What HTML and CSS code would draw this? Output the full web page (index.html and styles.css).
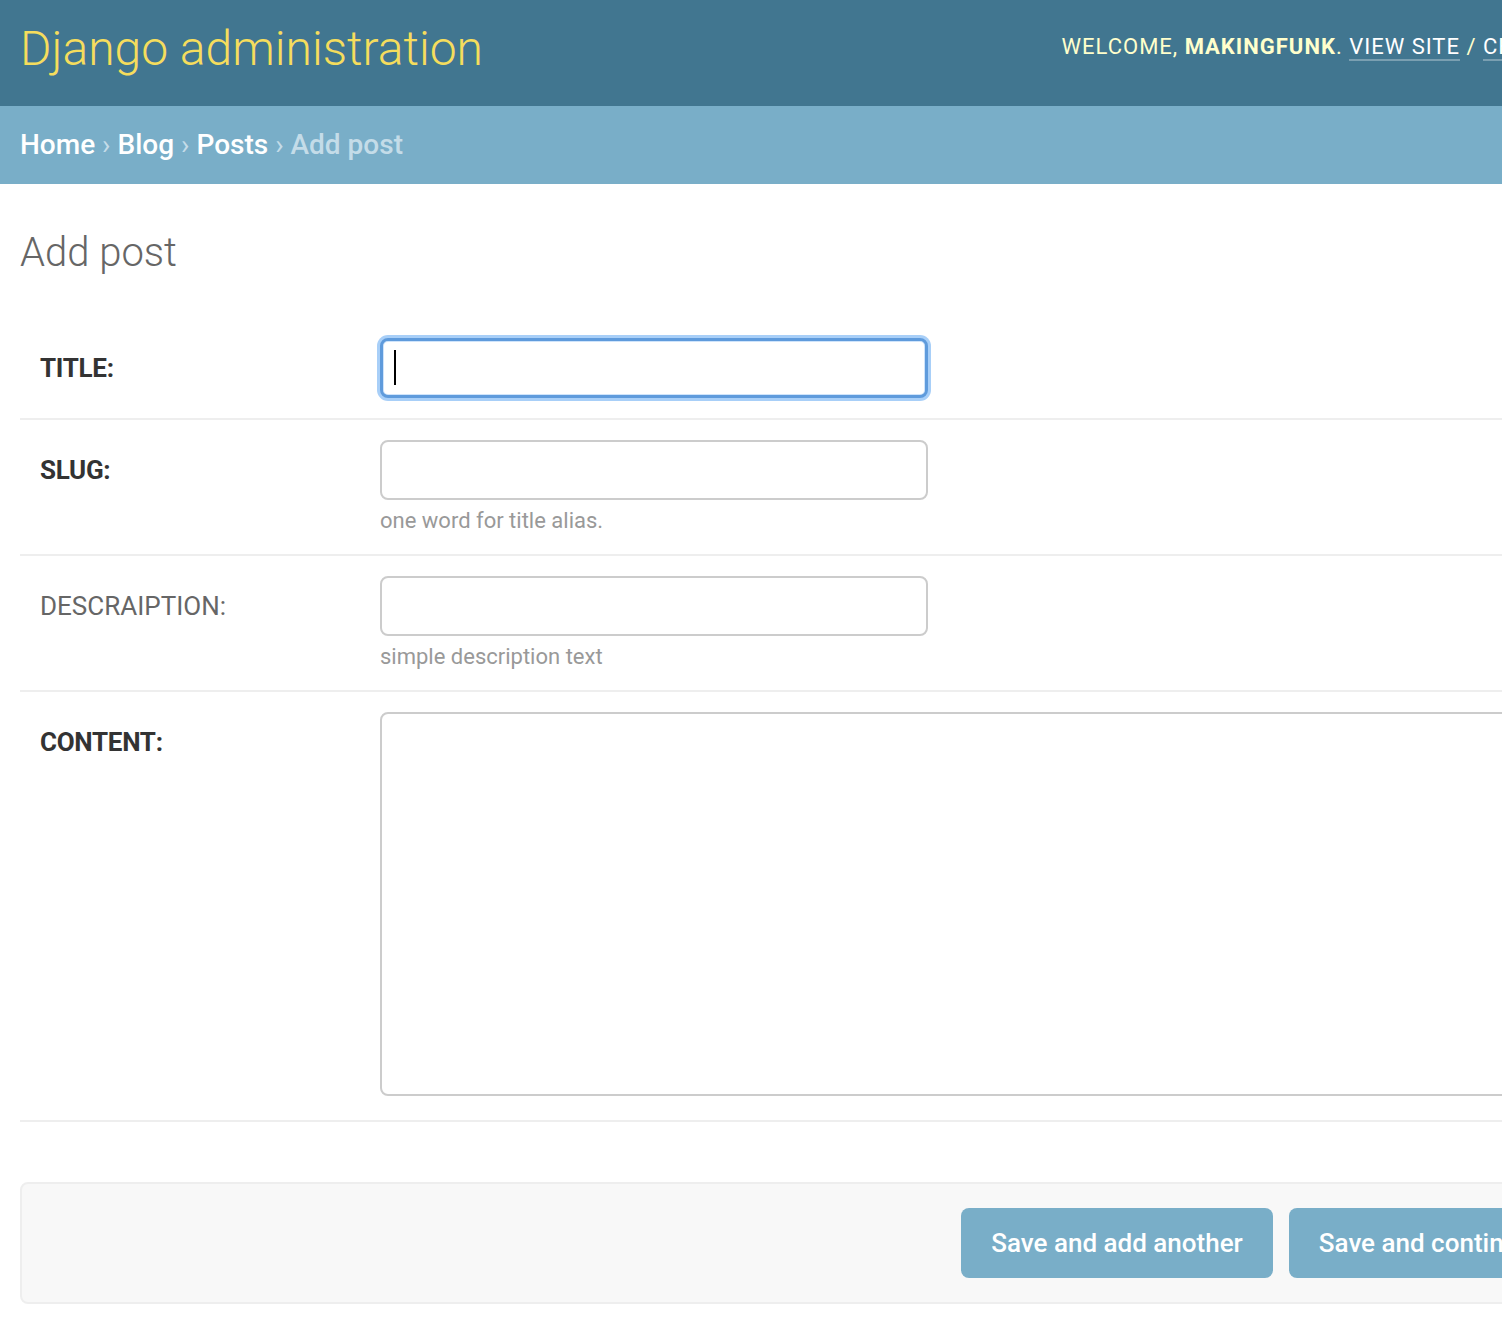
FILE: index.html
```html
<!DOCTYPE html>
<html lang="en">
<head>
<meta charset="utf-8">
<title>Add post | Django site admin</title>
<link rel="stylesheet" href="styles.css">
</head>
<body>
<div class="page">
  <header class="header">
    <h1 class="site-name">Django administration</h1>
    <div class="user-tools">Welcome, <strong>makingfunk</strong>. <a href="#">View site</a> / <a href="#">Change password</a> / <a href="#">Log out</a></div>
  </header>
  <nav class="breadcrumbs"><a href="#">Home</a> <span class="sep">›</span> <a href="#">Blog</a> <span class="sep">›</span> <a href="#">Posts</a> <span class="sep">›</span> Add post</nav>
  <main class="content">
    <h1 class="page-title">Add post</h1>
    <form class="form">
      <div class="form-row">
        <label class="label required" for="id_title">Title:</label>
        <div class="field">
          <span class="focus-wrap"><input class="text-input focused" id="id_title" type="text"></span>
        </div>
      </div>
      <div class="form-row">
        <label class="label required" for="id_slug">Slug:</label>
        <div class="field">
          <input class="text-input" id="id_slug" type="text">
          <div class="help">one word for title alias.</div>
        </div>
      </div>
      <div class="form-row">
        <label class="label" for="id_desc">Descraiption:</label>
        <div class="field">
          <input class="text-input" id="id_desc" type="text">
          <div class="help">simple description text</div>
        </div>
      </div>
      <div class="form-row">
        <label class="label required" for="id_content">Content:</label>
        <div class="field">
          <textarea class="textarea" id="id_content"></textarea>
        </div>
      </div>
      <div class="submit-row">
        <button type="button" class="btn">Save and add another</button>
        <button type="button" class="btn">Save and continue editing</button>
        <button type="button" class="btn btn-default">Save</button>
      </div>
    </form>
  </main>
</div>
</body>
</html>
```

FILE: styles.css
```css
html, body {
  margin: 0;
  padding: 0;
  overflow: hidden;
  background: #fff;
}
body {
  font-family: Roboto, "Liberation Sans", Arial, sans-serif;
  color: #333;
}
.page {
  width: 1850px;
}
.header {
  height: 106px;
  box-sizing: border-box;
  background: #417690;
  display: flex;
  align-items: flex-start;
  padding: 0 24px 0 20px;
}
.site-name {
  margin: 16px 0 0 0;
  font-size: 48px;
  line-height: 66px;
  font-weight: 300;
  color: #f5dd5d;
}
.user-tools {
  margin: 32px 0 0 auto;
  font-size: 22px;
  line-height: 30px;
  letter-spacing: 1px;
  text-transform: uppercase;
  color: #ffc;
  white-space: nowrap;
}
.user-tools strong {
  font-weight: 700;
}
.user-tools a {
  color: #fff;
  text-decoration: none;
  border-bottom: 2px solid rgba(255, 255, 255, 0.3);
}
.breadcrumbs {
  background: #79aec8;
  padding: 20px;
  font-size: 28px;
  line-height: 38px;
  font-weight: 500;
  color: #c4dce8;
  white-space: nowrap;
}
.breadcrumbs a {
  color: #fff;
  text-decoration: none;
}
.breadcrumbs .sep {
  color: #c4dce8;
  font-weight: 400;
}
.content {
  padding: 45px 39px 0 20px;
}
.page-title {
  margin: 0 0 41px 0;
  font-size: 40px;
  line-height: 48px;
  font-weight: 300;
  color: #666;
}
.form-row {
  display: flex;
  align-items: flex-start;
  padding: 20px;
  border-bottom: 2px solid #eee;
}
.label {
  flex: none;
  width: 340px;
  font-size: 26px;
  line-height: 60px;
  text-transform: uppercase;
  color: #666;
  font-weight: 400;
}
.label.required {
  color: #333;
  font-weight: 700;
  letter-spacing: -0.3px;
}
.field {
  display: flex;
  flex-direction: column;
  align-items: flex-start;
}
.text-input {
  display: block;
  box-sizing: border-box;
  width: 548px;
  height: 60px;
  margin: 0;
  border: 2px solid #ccc;
  border-radius: 8px;
  background: #fff;
  padding: 10px 12px;
  font-family: inherit;
  font-size: 26px;
  outline: none;
}
.focus-wrap {
  position: relative;
  display: block;
}
.text-input.focused {
  border: 3px solid #5f9bdc;
  box-shadow: 0 0 0 3px #a8cff8, inset 0 0 0 1px #cfe4fb;
}
.focus-wrap::after {
  content: "";
  position: absolute;
  left: 14px;
  top: 12px;
  width: 2px;
  height: 35px;
  background: #000;
}
.help {
  padding-top: 7px;
  font-size: 22px;
  line-height: 27px;
  color: #999;
}
.textarea {
  display: block;
  box-sizing: border-box;
  width: 1220px;
  height: 384px;
  margin: 0 0 4px 0;
  border: 2px solid #ccc;
  border-radius: 8px;
  background: #fff;
  resize: none;
  font-family: inherit;
  font-size: 26px;
}
.submit-row {
  margin-top: 60px;
  display: flex;
  justify-content: flex-end;
  gap: 16px;
  padding: 24px 28px;
  background: #f8f8f8;
  border: 2px solid #eee;
  border-radius: 8px;
}
.btn {
  height: 70px;
  padding: 0 30px;
  border: none;
  border-radius: 8px;
  background: #79aec8;
  color: #fff;
  font-family: inherit;
  font-size: 26px;
  font-weight: 500;
  line-height: 70px;
  white-space: nowrap;
}
.btn-default {
  background: #417690;
  font-weight: 700;
}
```
